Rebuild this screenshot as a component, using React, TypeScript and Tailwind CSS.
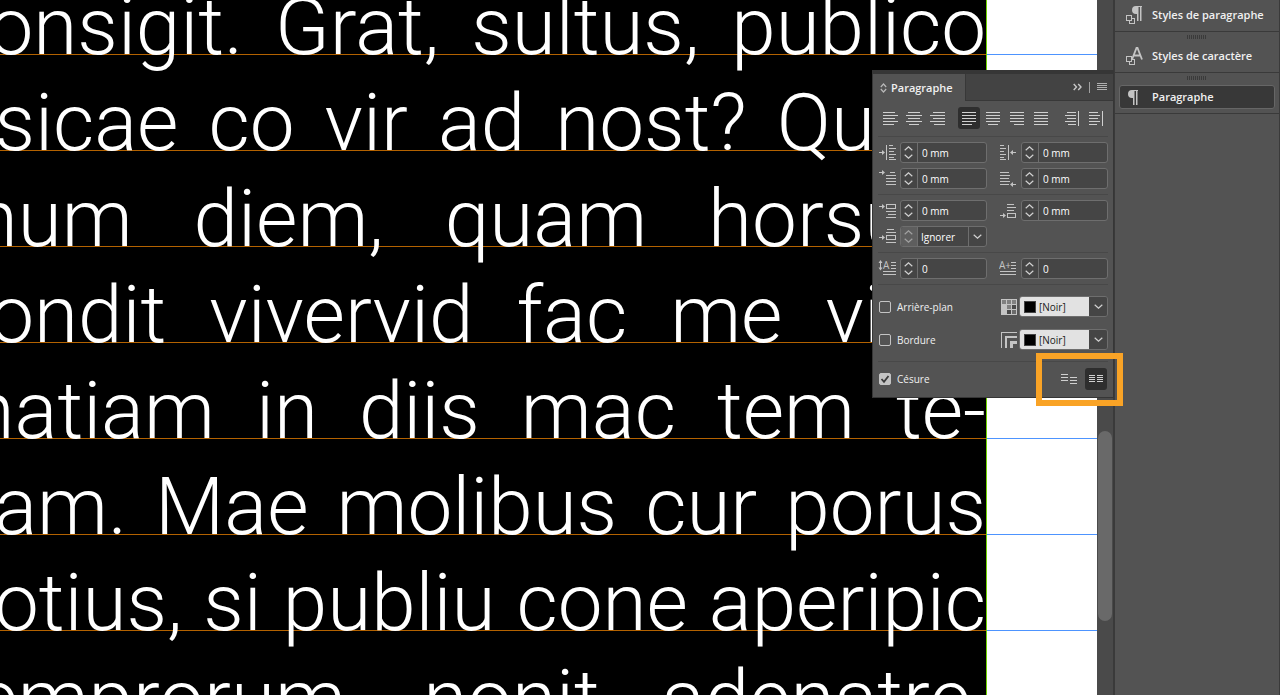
import React from 'react';

const lines = [
  { gap: 'gap-[32px]', words: ['onsigit.', 'Grat,', 'sultus,', 'publico'] },
  { gap: 'gap-[30px]', words: ['sicae', 'co', 'vir', 'ad', 'nost?', 'Quost'] },
  { gap: 'gap-[61px]', words: ['num', 'diem,', 'quam', 'horsusi.'] },
  { gap: 'gap-[43px]', words: ['ondit', 'vivervid', 'fac', 'me', 'vicio'] },
  { gap: 'gap-[41px]', words: ['natiam', 'in', 'diis', 'mac', 'tem', 'te-'] },
  { gap: 'gap-[28px]', words: ['am.', 'Mae', 'molibus', 'cur', 'porus'] },
  { gap: 'gap-[21px]', words: ['otius,', 'si', 'publiu', 'cone', 'aperipic'] },
  { gap: 'gap-[62px]', words: ['emprorum,', 'nonit', 'adenatre,'] },
];

// Paragraph alignment icons, one path per button
const alignGroups = [
  [
    { label: 'Aligner à gauche', d: 'M1 1.5h12M1 4.5h15M1 7.5h12M1 10.5h15M1 13.5h11' },
    { label: 'Centrer', d: 'M2 1.5h12M0 4.5h16M2 7.5h12M0 10.5h16M3 13.5h10' },
    { label: 'Aligner à droite', d: 'M3 1.5h12M0 4.5h15M3 7.5h12M0 10.5h15M4 13.5h11' },
  ],
  [
    { label: 'Justifier à gauche', d: 'M1 1.5h14M1 4.5h14M1 7.5h14M1 10.5h14M1 13.5h10', active: true },
    { label: 'Justifier au centre', d: 'M1 1.5h14M1 4.5h14M1 7.5h14M1 10.5h14M3 13.5h10' },
    { label: 'Justifier à droite', d: 'M1 1.5h14M1 4.5h14M1 7.5h14M1 10.5h14M5 13.5h10' },
    { label: 'Tout justifier', d: 'M1 1.5h14M1 4.5h14M1 7.5h14M1 10.5h14M1 13.5h14' },
  ],
  [
    { label: 'Vers le dos', d: 'M3 1.5h9M1 4.5h11M3 7.5h9M1 10.5h11M4 13.5h8M14.5 0v15' },
    { label: 'Opposé au dos', d: 'M1 1.5h9M1 4.5h11M1 7.5h9M1 10.5h11M1 13.5h8M14.5 0v15' },
  ],
];

const icons = {
  left: 'M0 9.5h5M7.5 2v15M10 2.5h4M10 5.5h7M10 8.5h5M10 11.5h7M10 14.5h5M10 16.5h7',
  right: 'M0 2.5h4M0 5.5h6M0 8.5h4M0 11.5h6M0 14.5h4M0 16.5h6M8.5 2v15M11 9.5h5',
  first: 'M0 3.5h5M11 3.5h5M7 6.5h10M7 9.5h10M7 12.5h10M7 15.5h10',
  last: 'M0 3.5h9M0 6.5h10M0 9.5h9M0 12.5h10M0 15.5h9M12 15.5h4',
  before: 'M0 5.5h5M7.5 3.5h9v4h-9zM7 10.5h10M9 13.5h8M7 16.5h10',
  after: 'M7 3.5h7M7 6.5h9M7 9.5h7M0 14.5h5M7.5 12.5h8v4h-8z',
  between: 'M8 2.5h7M7 5.5h10M0 10.5h5M7.5 8.5h9v4h-9zM7 15.5h10',
  lettrine: 'M12 3.5h5M12 6.5h5M12 9.5h5M4 12.5h13M4 15.5h13M1.5 2v8',
  chars: 'M11 3.5h5M11 6.5h5M11 9.5h5M0 12.5h16M0 15.5h16',
};

const heads: Record<string, string> = {
  left: 'M3 7l3 2.5L3 12z',
  right: 'M13 7l-3 2.5 3 2.5z',
  first: 'M3 1l3 2.5L3 6z',
  last: 'M13 13l-3 2.5 3 2.5z',
  before: 'M3 3l3 2.5L3 8z',
  after: 'M3 12l3 2.5L3 17z',
  between: 'M3 8l3 2.5L3 13z',
  lettrine: 'M-.5 4l2-3 2 3zM-.5 8.500l2 3 2-3z',
};

function FieldIcon({ name }: { name: keyof typeof icons }) {
  return (
    <svg width="19" height="19" viewBox="-1 0 19 19" className="shrink-0 text-[#c4c4c4]">
      <path d={icons[name]} stroke="currentColor" fill="none" shapeRendering="crispEdges" />
      {heads[name] && <path d={heads[name]} fill="currentColor" />}
      {name === 'lettrine' && <text x="4" y="10" fontSize="10" fill="currentColor">A</text>}
      {name === 'chars' && <text x="-1" y="10" fontSize="10" fill="currentColor">A+</text>}
    </svg>
  );
}

function Chevron({ up = false }: { up?: boolean }) {
  return (
    <svg width="9" height="5" viewBox="0 0 9 5">
      <path d={up ? 'M.7 4.300L4.500.8l3.800 3.500' : 'M.7.7l3.800 3.500L8.300.7'} stroke="currentColor" strokeWidth="1.2" fill="none" />
    </svg>
  );
}

function Spinner({ disabled = false }: { disabled?: boolean }) {
  return (
    <div className={`w-4 shrink-0 flex flex-col items-center justify-between py-[3px] pr-px ${disabled ? 'bg-[#5e5e5e] text-[#a0a0a0]' : 'text-[#d0d0d0]'}`}>
      <button aria-label="Augmenter" disabled={disabled}><Chevron up /></button>
      <button aria-label="Diminuer" disabled={disabled}><Chevron /></button>
    </div>
  );
}

function Field({ icon, label, value }: { icon: keyof typeof icons; label: string; value: string }) {
  return (
    <div className="flex items-center gap-[3px]">
      <FieldIcon name={icon} />
      <div className="flex flex-1 min-w-0 h-[21px] border border-[#6e6e6e] rounded-[3px] bg-[#454545] overflow-hidden">
        <Spinner />
        <input
          aria-label={label}
          defaultValue={value}
          className="min-w-0 flex-1 border-l border-[#6e6e6e] px-1 text-[10px] text-white outline-none"
        />
      </div>
    </div>
  );
}

function ColorSelect({ label }: { label: string }) {
  return (
    <div className="relative h-[21px] w-[89px] flex border border-[#6e6e6e] rounded-[3px] bg-[#454545] overflow-hidden">
      <select aria-label={label} className="w-full appearance-none pl-[19px] text-[10px] text-[#1a1a1a] bg-[linear-gradient(to_right,#e2e2e2_69px,#454545_69px)] outline-none">
        <option>[Noir]</option>
      </select>
      <span className="absolute left-1 top-1 size-3 bg-black border border-[#444]" />
      <span className="absolute right-1 top-[7px] text-[#d0d0d0] pointer-events-none"><Chevron /></span>
    </div>
  );
}

function CheckRow({ id, label, checked = false, children }: { id: string; label: string; checked?: boolean; children: React.ReactNode }) {
  return (
    <div className="flex items-center justify-between">
      <div className="flex items-center gap-[6px]">
        <span className="relative size-3">
          <input
            id={id}
            type="checkbox"
            defaultChecked={checked}
            className="block size-3 appearance-none rounded-[2px] border border-[#c4c4c4] checked:bg-[#c4c4c4]"
          />
          {checked && (
            <svg width="12" height="12" viewBox="0 0 12 12" className="absolute inset-0 pointer-events-none">
              <path d="M2.500 6l2.500 2.800L9.500 3" stroke="#3a3a3a" strokeWidth="1.800" fill="none" />
            </svg>
          )}
        </span>
        <label htmlFor={id}>{label}</label>
      </div>
      <div className="flex items-center gap-[2px]">{children}</div>
    </div>
  );
}

function Panel() {
  return (
    <section className="absolute top-[70px] right-0 w-[242px] border-t-4 border-x border-b border-[#363636] bg-[#535353] text-[10px] leading-[14px] text-[#f0f0f0]">
      <header className="h-[27px] flex bg-[#434343]">
        <h2 className="flex items-center gap-1 pl-[7px] pr-3 bg-[#535353] border-r border-[#383838] text-[11px] font-semibold">
          <svg width="7" height="10" viewBox="0 0 7 10" className="text-[#b8b8b8]">
            <path d="M.8 4l2.700-3 2.700 3M.8 6l2.700 3 2.700-3" stroke="currentColor" strokeWidth="1.200" fill="none" />
          </svg>
          Paragraphe
        </h2>
        <div className="flex-1 flex items-center justify-end gap-[7px] pr-[6px] border-b border-[#383838] text-[#c8c8c8]">
          <button aria-label="Réduire">
            <svg width="9" height="8" viewBox="0 0 9 8"><path d="M.7 1l2.800 3L.7 7M5.200 1L8 4 5.200 7" stroke="currentColor" strokeWidth="1.400" fill="none" /></svg>
          </button>
          <span className="w-px h-[11px] bg-[#a0a0a0]" />
          <button aria-label="Menu">
            <svg width="10" height="8" viewBox="0 0 10 8" shapeRendering="crispEdges"><path d="M0 .5h10M0 2.500h10M0 4.500h10M0 6.500h10" stroke="#b0b0b0" /></svg>
          </button>
        </div>
      </header>

      <div className="px-[5px]">
        <div className="flex gap-[9px] pt-[6px] pb-[7px] pl-px border-b border-[#484848]">
          {alignGroups.map((group, i) => (
            <div key={i} className="flex gap-[2px]">
              {group.map((item) => (
                <button
                  key={item.label}
                  aria-label={item.label}
                  className={`size-[22px] flex items-center justify-center rounded-[3px] ${item.active ? 'bg-[#2e2e2e]' : ''}`}
                >
                  <svg width="16" height="15" viewBox="0 0 16 15" shapeRendering="crispEdges">
                    <path d={item.d} stroke="#d0d0d0" />
                  </svg>
                </button>
              ))}
            </div>
          ))}
        </div>

        <div className="grid grid-cols-2 gap-x-3 gap-y-[5px] py-[5px] border-b border-[#484848]">
          <Field icon="left" label="Retrait à gauche" value="0 mm" />
          <Field icon="right" label="Retrait à droite" value="0 mm" />
          <Field icon="first" label="Retrait première ligne" value="0 mm" />
          <Field icon="last" label="Retrait dernière ligne" value="0 mm" />
        </div>

        <div className="grid grid-cols-2 gap-x-3 gap-y-[5px] py-[5px] border-b border-[#484848]">
          <Field icon="before" label="Espace avant" value="0 mm" />
          <Field icon="after" label="Espace après" value="0 mm" />
          <div className="flex items-center gap-[3px]">
            <FieldIcon name="between" />
            <div className="relative flex flex-1 min-w-0 h-[21px] border border-[#6e6e6e] rounded-[3px] bg-[#454545] overflow-hidden">
              <Spinner disabled />
              <select aria-label="Espace entre paragraphes" className="flex-1 min-w-0 appearance-none border-l border-[#6e6e6e] px-[3px] text-[10px] text-white outline-none">
                <option>Ignorer</option>
              </select>
              <span className="absolute right-0 inset-y-0 w-[18px] flex items-center justify-center border-l border-[#6e6e6e] text-[#d0d0d0] pointer-events-none">
                <Chevron />
              </span>
            </div>
          </div>
        </div>

        <div className="grid grid-cols-2 gap-x-3 py-[5px] border-b border-[#484848]">
          <Field icon="lettrine" label="Lettrine sur lignes" value="0" />
          <Field icon="chars" label="Lettrine de caractères" value="0" />
        </div>

        <div className="flex flex-col gap-3 py-[11px] pl-px border-b border-[#484848]">
          <CheckRow id="fond" label="Arrière-plan">
            <svg width="16" height="16" viewBox="0 0 16 16" shapeRendering="crispEdges">
              <path d="M0 0h16v16H0z" fill="#c4c4c4" />
              <path d="M1 1h4v4H1zM6 1h4v4H6zM11 1h4v4h-4zM6 6h4v4H6z" fill="#808080" />
              <path d="M11 6h4v4h-4zM6 11h4v4H6z" fill="#4a4a4a" />
              <path d="M11 11h4v4h-4z" fill="#6a6a6a" />
            </svg>
            <ColorSelect label="Couleur de fond" />
          </CheckRow>
          <CheckRow id="bordure" label="Bordure">
            <svg width="16" height="16" viewBox="0 0 16 16" shapeRendering="crispEdges">
              <path d="M.5 16V.5H16" stroke="#c4c4c4" fill="none" />
              <path d="M5 16V5h11" stroke="#c4c4c4" strokeWidth="2" fill="none" />
              <path d="M10.500 16v-5.500H16" stroke="#c4c4c4" strokeWidth="3" fill="none" />
            </svg>
            <ColorSelect label="Couleur de bordure" />
          </CheckRow>
        </div>

        <div className="pt-[6px] pb-[7px] px-px">
          <CheckRow id="cesure" label="Césure" checked>
            <button aria-label="Ne pas aligner sur la grille" className="size-[22px] mr-[3px] flex items-center justify-center">
              <svg width="16" height="11" viewBox="0 0 16 11" shapeRendering="crispEdges">
                <path d="M0 .5h7M0 3.500h7M0 6.500h7M9 3.500h7M9 6.500h7M9 9.500h7" stroke="#d0d0d0" />
              </svg>
            </button>
            <button aria-label="Aligner sur la grille" className="size-[22px] flex items-center justify-center rounded-[3px] bg-[#2e2e2e]">
              <svg width="14" height="8" viewBox="0 0 14 8" shapeRendering="crispEdges">
                <path d="M0 .5h6M0 2.500h6M0 4.500h6M0 6.500h6M8 .5h6M8 2.500h6M8 4.500h6M8 6.500h6" stroke="#d0d0d0" />
              </svg>
            </button>
          </CheckRow>
        </div>
      </div>

      {/* Highlight around the grid buttons */}
      <div className="absolute -right-[10px] -bottom-[9px] w-[87px] h-[53px] border-[6px] border-[#f9a326] pointer-events-none" />
    </section>
  );
}

function Pilcrow({ className = '' }: { className?: string }) {
  return (
    <svg width="12" height="15" viewBox="0 0 12 15" className={className}>
      <path d="M6.500 0v8H5a4 4 0 010-8zM6 0h1.500v15H6zM9 0h1.500v15H9zM6 0h5v1H6z" fill="#c4c4c4" />
    </svg>
  );
}

function StyleSquares() {
  return (
    <svg width="9" height="9" viewBox="0 0 9 9" className="absolute left-0 bottom-0" shapeRendering="crispEdges">
      <path d="M3.500 3.500h5v5h-5z" fill="none" stroke="#c4c4c4" />
      <path d="M.5.5h5v5h-5z" fill="#535353" stroke="#c4c4c4" />
    </svg>
  );
}

function Grip() {
  return (
    <svg width="20" height="4" viewBox="0 0 20 4" className="mx-auto mb-[5px]" shapeRendering="crispEdges">
      <path d="M.5 0v4M2.500 0v4M4.500 0v4M6.500 0v4M8.500 0v4M10.500 0v4M12.500 0v4M14.500 0v4M16.500 0v4M18.500 0v4" stroke="#3a3a3a" />
    </svg>
  );
}

function Dock() {
  return (
    <aside className="w-[166px] shrink-0 border-x border-[#3a3a3a] bg-[#535353] text-[#f0f0f0] text-[11px] leading-[14px] font-semibold">
      <div className="h-8 px-1 pt-[3px] border-b border-[#3a3a3a]">
        <button className="w-full h-6 flex items-center gap-[9px] pl-[7px]">
          <span className="relative w-[17px] h-[18px]">
            <StyleSquares />
            <Pilcrow className="absolute right-0 top-0" />
          </span>
          Styles de paragraphe
        </button>
      </div>
      <div className="h-[41px] px-1 pt-[3px] border-b border-[#3a3a3a]">
        <Grip />
        <button className="w-full h-6 flex items-center gap-[9px] pl-[7px]">
          <span className="relative w-[17px] h-[18px]">
            <StyleSquares />
            <svg width="12" height="13" viewBox="0 0 12 13" className="absolute right-0 top-0">
              <path d="M1 12.500L5.500 1h1L11 12.500M2.500 8.500h7" stroke="#c4c4c4" strokeWidth="1.800" fill="none" />
            </svg>
          </span>
          Styles de caractère
        </button>
      </div>
      <div className="h-[41px] px-1 pt-[3px] border-b border-[#3a3a3a]">
        <Grip />
        <button className="w-full h-6 flex items-center gap-[9px] pl-[7px] rounded-[3px] border border-[#666] bg-[#383838]">
          <span className="w-4"><Pilcrow /></span>
          Paragraphe
        </button>
      </div>
    </aside>
  );
}

export default function App() {
  return (
    <div className="h-screen flex overflow-hidden bg-[#535353] font-['Open_Sans',sans-serif]">
      <main className="relative flex-1 min-w-0 flex">
        <div className="flex-1 min-w-0 overflow-hidden bg-black border-r border-[#6fd400]">
          <div className="-mt-[41px] font-['Roboto',sans-serif] font-light text-[80px] leading-[136px] text-white">
            {lines.map((line) => (
              <p key={line.words[0]} className={`h-24 flex justify-end border-b border-[#b36200] whitespace-nowrap ${line.gap}`}>
                {line.words.map((word) => (
                  <span key={word}>{word}</span>
                ))}
              </p>
            ))}
          </div>
        </div>
        <div className="w-[110px] shrink-0 overflow-hidden bg-white">
          <div className="-mt-[41px]">
            {lines.map((line) => (
              <div key={line.words[0]} className="h-24 border-b border-[#4d94ff]" />
            ))}
          </div>
        </div>
        <div className="w-[17px] shrink-0 flex justify-center bg-[#4a4a4a] border-r border-[#3a3a3a]">
          <div className="mt-[431px] w-[14px] h-[190px] rounded-full bg-[#696969]" />
        </div>
        <Panel />
      </main>
      <Dock />
    </div>
  );
}
